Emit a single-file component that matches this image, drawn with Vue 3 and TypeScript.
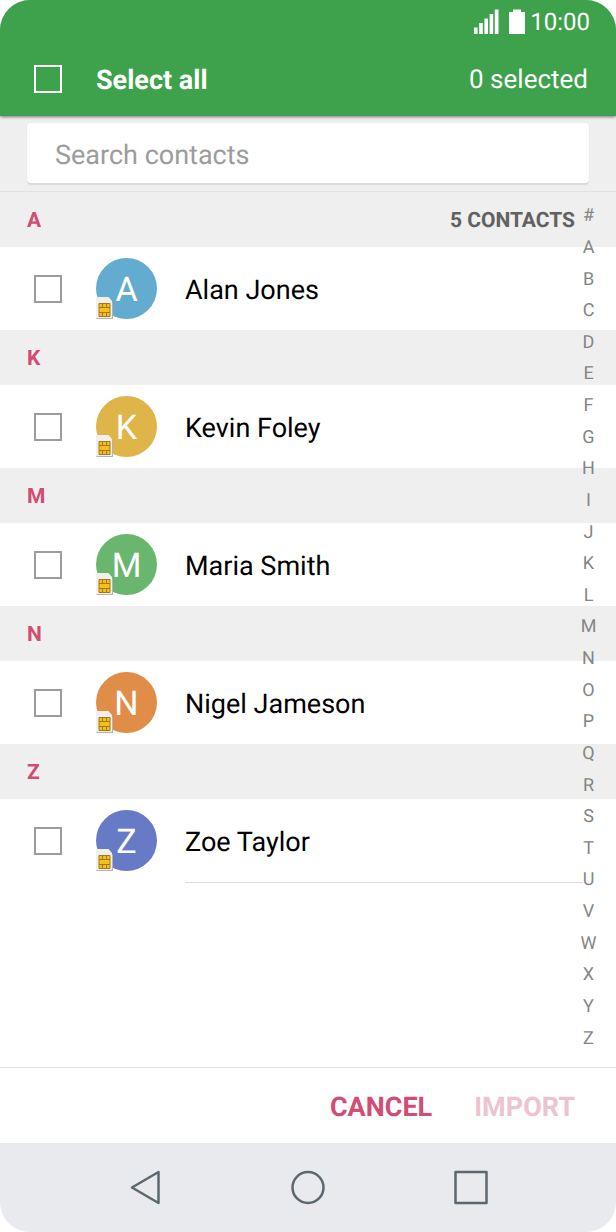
<script setup lang="ts">
import { computed, ref } from 'vue'

interface Contact {
  name: string
  tone: string
}

const contacts: Contact[] = [
  { name: 'Alan Jones', tone: 'blue' },
  { name: 'Kevin Foley', tone: 'yellow' },
  { name: 'Maria Smith', tone: 'green' },
  { name: 'Nigel Jameson', tone: 'orange' },
  { name: 'Zoe Taylor', tone: 'indigo' },
]

const indexLetters: string[] = '#ABCDEFGHIJKLMNOPQRSTUVWXYZ'.split('')

const query = ref('')
const selected = ref<string[]>([])

const visible = computed(() =>
  contacts.filter((c) => c.name.toLowerCase().includes(query.value.toLowerCase())),
)

const allSelected = computed({
  get: () => selected.value.length === contacts.length,
  set: (on: boolean) => {
    selected.value = on ? contacts.map((c) => c.name) : []
  },
})
</script>

<template>
  <div class="phone">
    <header class="top">
      <div class="status">
        <svg class="signal" viewBox="0 0 25 25" aria-hidden="true">
          <path d="M0 18.500h3.600V25H0zM5.200 14h3.600v11H5.200zM10.400 9.500H14V25h-3.600zM15.600 5h3.600v20h-3.600zM20.800 0.500h3.700V25h-3.700z" />
        </svg>
        <svg class="battery" viewBox="0 0 16 25" aria-hidden="true">
          <path d="M4 0.500h8v2.500h4v22H0V3h4z" />
        </svg>
        <span class="time">10:00</span>
      </div>
      <div class="toolbar">
        <input id="select-all" v-model="allSelected" class="check light" type="checkbox" />
        <label class="all-label" for="select-all">Select all</label>
        <span class="count">{{ selected.length }} selected</span>
      </div>
    </header>

    <div class="search">
      <input
        v-model="query"
        class="search-box"
        type="text"
        placeholder="Search contacts"
        aria-label="Search contacts"
      />
    </div>

    <main class="list">
      <section v-for="(contact, i) in visible" :id="contact.name[0]" :key="contact.name">
        <h2 class="heading">
          <span>{{ contact.name[0] }}</span>
          <span v-if="i === 0" class="total">{{ visible.length }} CONTACTS</span>
        </h2>
        <label class="row">
          <input v-model="selected" class="check" type="checkbox" :value="contact.name" />
          <span class="avatar" :class="contact.tone">
            {{ contact.name[0] }}
            <svg class="sim" viewBox="0 0 17 22" aria-hidden="true">
              <path d="M0.500 1h12l4.500 5v16H0.500z" fill="#b4b2b2" />
              <path d="M0 0h12.500L16 4v17H0z" fill="#f0efee" />
              <path d="M3 6.500h11v13H3z" fill="#f6bd1b" stroke="#a17a14" />
              <path d="M3 10.500h11M3 15.500h11M6.500 6.500v4M10.500 6.500v4M6.500 15.500v4M10.500 15.500v4" stroke="#a17a14" />
            </svg>
          </span>
          <span class="name">{{ contact.name }}</span>
        </label>
      </section>
      <div class="divider"></div>
      <nav class="index" aria-label="Alphabet index">
        <a v-for="letter in indexLetters" :key="letter" :href="'#' + letter">{{ letter }}</a>
      </nav>
    </main>

    <footer class="actions">
      <button class="action" type="button" @click="selected = []">CANCEL</button>
      <button class="action" type="button" :disabled="selected.length === 0">IMPORT</button>
    </footer>

    <nav class="system">
      <button type="button" aria-label="Back">
        <svg viewBox="0 0 36 36"><path d="M5 17.500 31.500 2v31z" /></svg>
      </button>
      <button type="button" aria-label="Home">
        <svg viewBox="0 0 36 36"><circle cx="18" cy="17.500" r="15.500" /></svg>
      </button>
      <button type="button" aria-label="Recent apps">
        <svg viewBox="0 0 36 36"><path d="M2.500 2h31v31h-31z" /></svg>
      </button>
    </nav>
  </div>
</template>

<style>
body {
  margin: 0;
  background: #fff;
}
</style>

<style scoped>
* {
  box-sizing: border-box;
}

.phone {
  display: flex;
  flex-direction: column;
  min-height: 100vh;
  overflow: hidden;
  border-radius: 30px;
  background: #fff;
  color: #000;
  font-family: Roboto, "Liberation Sans", sans-serif;
  font-size: 27px;
  text-rendering: geometricPrecision;
}

button,
input {
  font: inherit;
  text-rendering: inherit;
}

.top {
  position: relative;
  z-index: 1;
  background: #3da24b;
  box-shadow: 0 1px 3px rgba(0, 0, 0, 0.5);
  color: #fff;
}

.status {
  display: flex;
  align-items: center;
  justify-content: flex-end;
  height: 42px;
  padding-right: 26px;
}

.signal,
.battery {
  height: 25px;
  fill: #fff;
}

.signal {
  width: 25px;
  margin-right: 10px;
}

.battery {
  width: 16px;
  margin-right: 5px;
}

.time {
  padding-top: 2px;
  font-size: 24px;
}

.toolbar {
  display: flex;
  align-items: center;
  height: 74px;
  padding: 0 28px 0 34px;
}

.check {
  flex: none;
  width: 28px;
  height: 28px;
  margin: 0 34px 0 0;
  appearance: none;
  border: 2px solid #9c9c9c;
  background: transparent;
}

.check.light {
  border-color: #fff;
}

.check:checked {
  background: currentColor;
  box-shadow: inset 0 0 0 4px #fff;
}

.all-label,
.count,
.name {
  padding-top: 2px;
}

.all-label {
  font-weight: 700;
}

.count {
  margin-left: auto;
  font-size: 26px;
}

.search {
  padding: 7px 27px 8px;
  border-bottom: 1px solid #e2e2e2;
  background: #efefef;
}

.search-box {
  display: block;
  width: 100%;
  height: 60px;
  padding: 4px 28px 0;
  border: 0;
  border-radius: 4px;
  outline: 0;
  background: #fff;
  box-shadow: 0 2px 1px #d9dbda;
}

.search-box::placeholder {
  color: #9c9c9c;
  opacity: 1;
}

.list {
  position: relative;
  flex: 1;
}

.heading {
  display: flex;
  align-items: center;
  justify-content: space-between;
  height: 55px;
  margin: 0;
  padding: 2px 41px 0 27px;
  background: #efefef;
  color: #d14d73;
  font-size: 21px;
  font-weight: 700;
}

.total {
  color: #616161;
}

.row {
  display: flex;
  align-items: center;
  height: 83px;
  padding-left: 34px;
}

.avatar {
  position: relative;
  display: flex;
  flex: none;
  align-items: center;
  justify-content: center;
  width: 61px;
  height: 61px;
  margin-right: 28px;
  padding-top: 2px;
  border-radius: 50%;
  color: #fff;
  font-size: 34px;
}

.blue { background: #63accf; }
.yellow { background: #dfb549; }
.green { background: #69b66e; }
.orange { background: #e08d48; }
.indigo { background: #667ac5; }

.sim {
  position: absolute;
  bottom: 0;
  left: 0;
  width: 17px;
  height: 22px;
  fill: none;
}

.divider {
  margin: 0 33px 0 185px;
  border-top: 1px solid #dcdcdc;
}

.index {
  position: absolute;
  top: 8px;
  right: 12px;
  bottom: 13px;
  display: flex;
  flex-direction: column;
  width: 31px;
}

.index a {
  display: flex;
  flex: 1;
  align-items: center;
  justify-content: center;
  color: #858585;
  font-size: 18px;
  text-decoration: none;
}

.actions {
  display: flex;
  align-items: center;
  justify-content: flex-end;
  gap: 42px;
  height: 76px;
  padding: 2px 41px 0 0;
  border-top: 1px solid #dfdfdf;
}

.action {
  padding: 0;
  border: 0;
  background: none;
  color: #d14d73;
  font-weight: 700;
}

.action:disabled {
  color: #eec3d0;
}

.system {
  display: grid;
  grid-template-columns: repeat(3, 1fr);
  height: 89px;
  padding: 0 64px;
  background: #e8eaed;
}

.system button {
  display: flex;
  align-items: center;
  justify-content: center;
  padding: 0;
  border: 0;
  background: none;
}

.system svg {
  width: 36px;
  height: 36px;
  fill: none;
  stroke: #5b6870;
  stroke-width: 2.500;
  stroke-linejoin: round;
}
</style>
